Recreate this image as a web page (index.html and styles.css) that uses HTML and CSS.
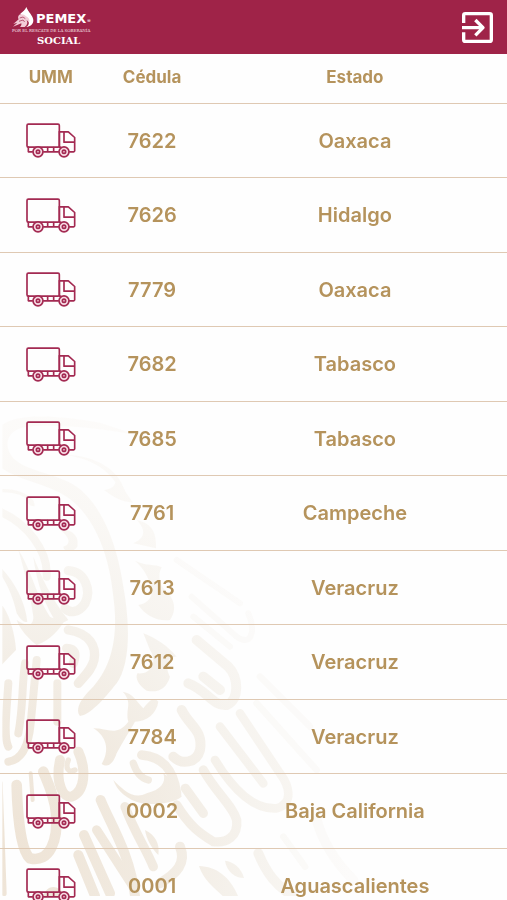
FILE: index.html
```html
<!DOCTYPE html>
<html lang="es">
<head>
<meta charset="utf-8">
<meta name="viewport" content="width=device-width, initial-scale=1">
<title>PEMEX Social</title>
<link rel="stylesheet" href="styles.css">
</head>
<body>
<svg width="0" height="0" class="sprite" aria-hidden="true">
  <symbol id="truck" viewBox="0 0 150 104">
    <g fill="none" stroke="currentColor" stroke-width="5" stroke-linejoin="round" stroke-linecap="round">
      <rect x="3" y="3" width="97" height="69" rx="4"/>
      <path d="M100 26h27l19 17v40q0 3-3 3h-12M114 28v29h31M7 72v14h12M53 86h44M100 72V25M100 72h4M65 73v12M83 73v12"/>
      <g fill="#f7dbe4"><circle cx="36" cy="86" r="15"/><circle cx="114" cy="86" r="15"/></g>
      <circle cx="36" cy="86" r="5"/><circle cx="114" cy="86" r="5"/>
    </g>
  </symbol>
</svg>
<header class="topbar">
  <div class="brand">
    <div class="brand-main">
      <svg class="brand-mark" viewBox="0 0 66 60" aria-hidden="true">
        <path fill="#fff" d="M43 0C48 14 64 27 64 40c0 12-9 19-21 20 7-5 10-12 5-18-4-6-10-8-13-11-5-4-8-7-10-11C32 14 40 9 43 0z"/>
        <path fill="#f3cdd8" d="M22 23c7-3 15-1 20 5 7 3 12 9 10 16l-8-5c4 8 2 15-6 21H24c4-4 5-7 4-11L3 59l13-12-12 4 16-14C17 32 18 27 22 23z"/>
        <path fill="none" stroke="#9f2348" stroke-width="2" d="M23 33l10-3 7 5M21 43l12-4 5 6"/>
      </svg>
      <span class="brand-name">PEMEX</span><span class="brand-reg">®</span>
    </div>
    <span class="brand-tag">POR EL RESCATE DE LA SOBERANÍA</span>
    <span class="brand-social">SOCIAL</span>
  </div>
  <button class="exit" type="button" aria-label="Salir">
    <svg viewBox="0 0 93 93" aria-hidden="true" fill="none" stroke="#fff" stroke-width="10" stroke-linejoin="round">
      <path d="M5 33V10q0-5 5-5h73q5 0 5 5v73q0 5-5 5H10q-5 0-5-5V61M0 47h62M40 24l23 23-23 23"/>
    </svg>
  </button>
</header>
<main class="content">
  <svg class="watermark" viewBox="0 0 1200 1500" aria-hidden="true">
    <defs>
      <radialGradient id="fade" gradientUnits="userSpaceOnUse" cx="0" cy="1350" r="1400">
        <stop offset="0" stop-color="#eee3d5"/>
        <stop offset=".3" stop-color="#f1eae0"/>
        <stop offset=".55" stop-color="#f6f3ee"/>
        <stop offset=".75" stop-color="#faf8f5"/>
        <stop offset="1" stop-color="#fdfcfb"/>
      </radialGradient>
      <clipPath id="edge"><rect x="7" y="0" width="1193" height="1488"/></clipPath>
    </defs>
    <g clip-path="url(#edge)">
      <g fill="url(#fade)">
        <path d="M0 80C40 42 150 42 300 68L420 108C300 82 120 68 60 85 20 100 10 140 40 175 80 215 170 220 230 260 300 310 350 420 370 560 395 700 385 800 350 850 310 900 270 945 240 948 225 930 240 900 270 870 340 800 355 700 340 590 330 480 290 350 200 290 140 250 50 240 0 200z"/>
        <path d="M195 164C280 165 345 205 365 250 372 270 385 290 400 308 360 305 340 290 312 270 330 268 345 260 346 246 310 195 260 175 195 164z"/>
        <path d="M410 360C460 370 470 405 468 445L400 430C435 415 440 390 410 360z"/>
        <path d="M405 482C440 500 465 490 485 502 470 530 480 560 505 580 530 610 525 640 510 660 470 665 435 645 415 615 450 610 465 580 450 550 440 520 425 500 405 482z"/>
        <path d="M430 700C470 715 505 740 530 770 500 770 495 800 510 830 500 865 475 880 440 872 415 855 405 835 412 820 450 825 475 790 450 750z"/>
        <path d="M368 875C400 880 410 905 430 925 450 900 460 890 475 905 470 940 440 965 405 965 385 1000 365 1030 350 1060 340 1090 325 1105 305 1092 330 1050 320 1010 280 985 325 985 350 1010 385 965 375 925 400 910 368 875z"/>
        <path d="M0 500C40 540 75 600 82 665 70 670 60 655 50 640 40 590 20 550 0 520z"/>
        <path d="M55 450C90 500 110 590 150 650 170 660 190 655 200 650 180 690 150 720 110 735 90 720 60 690 50 660 80 680 100 680 100 650 90 580 75 520 55 450z"/>
        <path d="M0 610C25 630 45 700 48 750L0 800z"/>
        <path d="M100 470C125 530 150 590 205 660L175 675C135 620 110 550 100 470z"/>
        <path d="M180 390C210 385 240 405 232 440 220 460 190 455 190 440 210 435 215 415 180 390z"/>
        <path d="M80 295C92 290 105 305 104 319 90 320 80 310 80 295z"/>
        <path d="M340 1140C370 1170 400 1200 440 1180 480 1170 500 1150 490 1120 520 1140 540 1160 545 1190 520 1210 470 1215 425 1210 380 1200 350 1170 340 1140z"/>
        <path d="M597 1398C650 1400 690 1430 715 1490L670 1490C640 1460 610 1440 597 1398z"/>
        <path d="M675 1382C700 1384 725 1405 732 1434 705 1434 680 1415 675 1382z"/>
        <path d="M435 1290C465 1305 480 1330 475 1365 455 1345 440 1320 435 1290z"/>
        <path d="M130 1488C140 1455 175 1450 195 1488z"/>
      </g>
      <g fill="none" stroke="url(#fade)" stroke-linecap="round">
        <path stroke-width="10" d="M0 272C40 270 75 280 96 305"/>
        <path stroke-width="24" d="M0 335C80 370 145 450 140 530"/>
        <path stroke-width="28" d="M205 512C255 515 275 570 255 610 235 640 210 640 195 625"/>
        <path stroke-width="28" d="M205 690C270 700 290 740 282 780 275 810 255 825 235 850M200 745C225 745 230 760 220 790"/>
        <path stroke-width="24" d="M25 850C20 930 10 1010 25 1040M25 1085C60 1080 85 1050 92 970L110 780M55 1000C70 920 65 860 75 790M172 850L172 965"/>
        <path stroke-width="30" d="M180 1080C165 1150 190 1195 215 1190 255 1175 260 1110 235 1055"/>
        <path stroke-width="16" d="M205 1080C195 1105 205 1120 225 1110M0 1150L12 1480"/>
        <path stroke-width="32" d="M50 1155C52 1230 60 1350 90 1375 150 1390 175 1320 168 1240 165 1190 140 1140 130 1115"/>
        <path stroke-width="12" d="M92 1120L98 1200"/>
        <path stroke-width="30" d="M235 1365L285 1488M252 1305L330 1480M302 1200C330 1270 390 1360 405 1488"/>
        <path stroke-width="28" d="M290 1290L400 1460M375 1220C400 1290 440 1350 460 1400M425 1065C490 1070 520 1110 530 1180"/>
        <path stroke-width="22" d="M400 1090C410 1120 425 1135 445 1140"/>
        <path stroke-width="30" d="M480 1450C530 1420 560 1390 540 1340M545 930C570 980 610 990 600 1050 590 1090 545 1095 520 1070"/>
        <path stroke-width="28" d="M556 1165L610 1240M610 1110C650 1180 700 1220 710 1260 715 1310 680 1330 640 1325 600 1300 570 1280 530 1215"/>
        <path stroke-width="26" d="M645 1080C700 1170 760 1230 830 1225 880 1210 870 1160 840 1120L720 940M660 980L790 1150"/>
        <path stroke-width="30" d="M565 850C620 870 640 920 680 915 720 900 715 830 685 800L590 720M610 830L660 870"/>
        <g opacity=".45">
          <path stroke-width="18" d="M530 480L720 610M575 590L710 710C750 740 770 700 745 640M580 650L690 740"/>
          <path stroke-width="20" d="M780 830L930 980M770 910L950 1110M850 1310L915 1400"/>
          <path stroke-width="30" d="M950 1260C970 1330 1010 1390 1060 1440"/>
        </g>
        <path stroke-width="30" d="M775 1360C800 1420 830 1460 880 1488"/>
      </g>
    </g>
  </svg>
  <table class="units">
    <thead>
      <tr><th class="col-unit" scope="col">UMM</th><th class="col-id" scope="col">Cédula</th><th scope="col">Estado</th></tr>
    </thead>
    <tbody>
      <tr><td><svg class="truck" role="img" aria-label="Unidad"><use href="#truck"/></svg></td><td>7622</td><td>Oaxaca</td></tr>
      <tr><td><svg class="truck" role="img" aria-label="Unidad"><use href="#truck"/></svg></td><td>7626</td><td>Hidalgo</td></tr>
      <tr><td><svg class="truck" role="img" aria-label="Unidad"><use href="#truck"/></svg></td><td>7779</td><td>Oaxaca</td></tr>
      <tr><td><svg class="truck" role="img" aria-label="Unidad"><use href="#truck"/></svg></td><td>7682</td><td>Tabasco</td></tr>
      <tr><td><svg class="truck" role="img" aria-label="Unidad"><use href="#truck"/></svg></td><td>7685</td><td>Tabasco</td></tr>
      <tr><td><svg class="truck" role="img" aria-label="Unidad"><use href="#truck"/></svg></td><td>7761</td><td>Campeche</td></tr>
      <tr><td><svg class="truck" role="img" aria-label="Unidad"><use href="#truck"/></svg></td><td>7613</td><td>Veracruz</td></tr>
      <tr><td><svg class="truck" role="img" aria-label="Unidad"><use href="#truck"/></svg></td><td>7612</td><td>Veracruz</td></tr>
      <tr><td><svg class="truck" role="img" aria-label="Unidad"><use href="#truck"/></svg></td><td>7784</td><td>Veracruz</td></tr>
      <tr><td><svg class="truck" role="img" aria-label="Unidad"><use href="#truck"/></svg></td><td>0002</td><td>Baja California</td></tr>
      <tr><td><svg class="truck" role="img" aria-label="Unidad"><use href="#truck"/></svg></td><td>0001</td><td>Aguascalientes</td></tr>
    </tbody>
  </table>
</main>
</body>
</html>
```
FILE: styles.css
```css
* {
  box-sizing: border-box;
}

body {
  margin: 0;
  height: 100vh;
  display: flex;
  flex-direction: column;
  background: #fefefe;
  color: #b5935c;
  font-family: Inter, "Liberation Sans", sans-serif;
}

.sprite {
  position: absolute;
}

.topbar {
  flex: none;
  display: flex;
  align-items: center;
  justify-content: space-between;
  height: 54px;
  padding: 0 14px 0 12px;
  background: #9f2348;
  color: #fff;
}

.brand {
  display: flex;
  flex-direction: column;
}

.brand-main {
  display: flex;
  align-items: center;
  height: 20px;
}

.brand-mark {
  width: 22px;
  height: 20px;
  margin-right: 2px;
}

.brand-name {
  font: bold 13px/20px "DejaVu Sans", sans-serif;
  padding-top: 4px;
}

.brand-reg {
  font-size: 5px;
  padding-top: 8px;
  margin-left: 1px;
}

.brand-tag {
  font: 4px/8px "DejaVu Serif", serif;
  color: #f7e2e8;
}

.brand-social {
  font: bold 10px/12px "DejaVu Serif", serif;
  padding-left: 25px;
}

.exit {
  padding: 0;
  border: 0;
  background: none;
  cursor: pointer;
}

.exit svg {
  display: block;
  width: 31px;
  height: 31px;
}

.content {
  position: relative;
  z-index: 0;
  flex: 1;
  min-height: 0;
  overflow-y: auto;
  scrollbar-width: none;
}

.watermark {
  position: fixed;
  left: 0;
  bottom: 0;
  z-index: -1;
  width: 400px;
  height: 500px;
}

.units {
  width: 100%;
  table-layout: fixed;
  border-collapse: separate;
  border-spacing: 0;
  text-align: center;
  font-size: 20px;
  font-weight: 600;
}

.col-unit,
.col-id {
  width: 20%;
}

.units th,
.units td {
  padding: 0;
  border-bottom: 1px solid #dfc9b3;
  vertical-align: middle;
}

.units th {
  height: 50px;
  padding-bottom: 4px;
  font-size: 17px;
  font-weight: 700;
}

.units td {
  height: 74px;
}

.units tr:nth-child(even) td {
  height: 75px;
}

.units td:first-child {
  padding-left: 1px;
}

.truck {
  display: block;
  width: 50px;
  height: 35px;
  margin: 0 auto;
  color: #a32a52;
}
```
